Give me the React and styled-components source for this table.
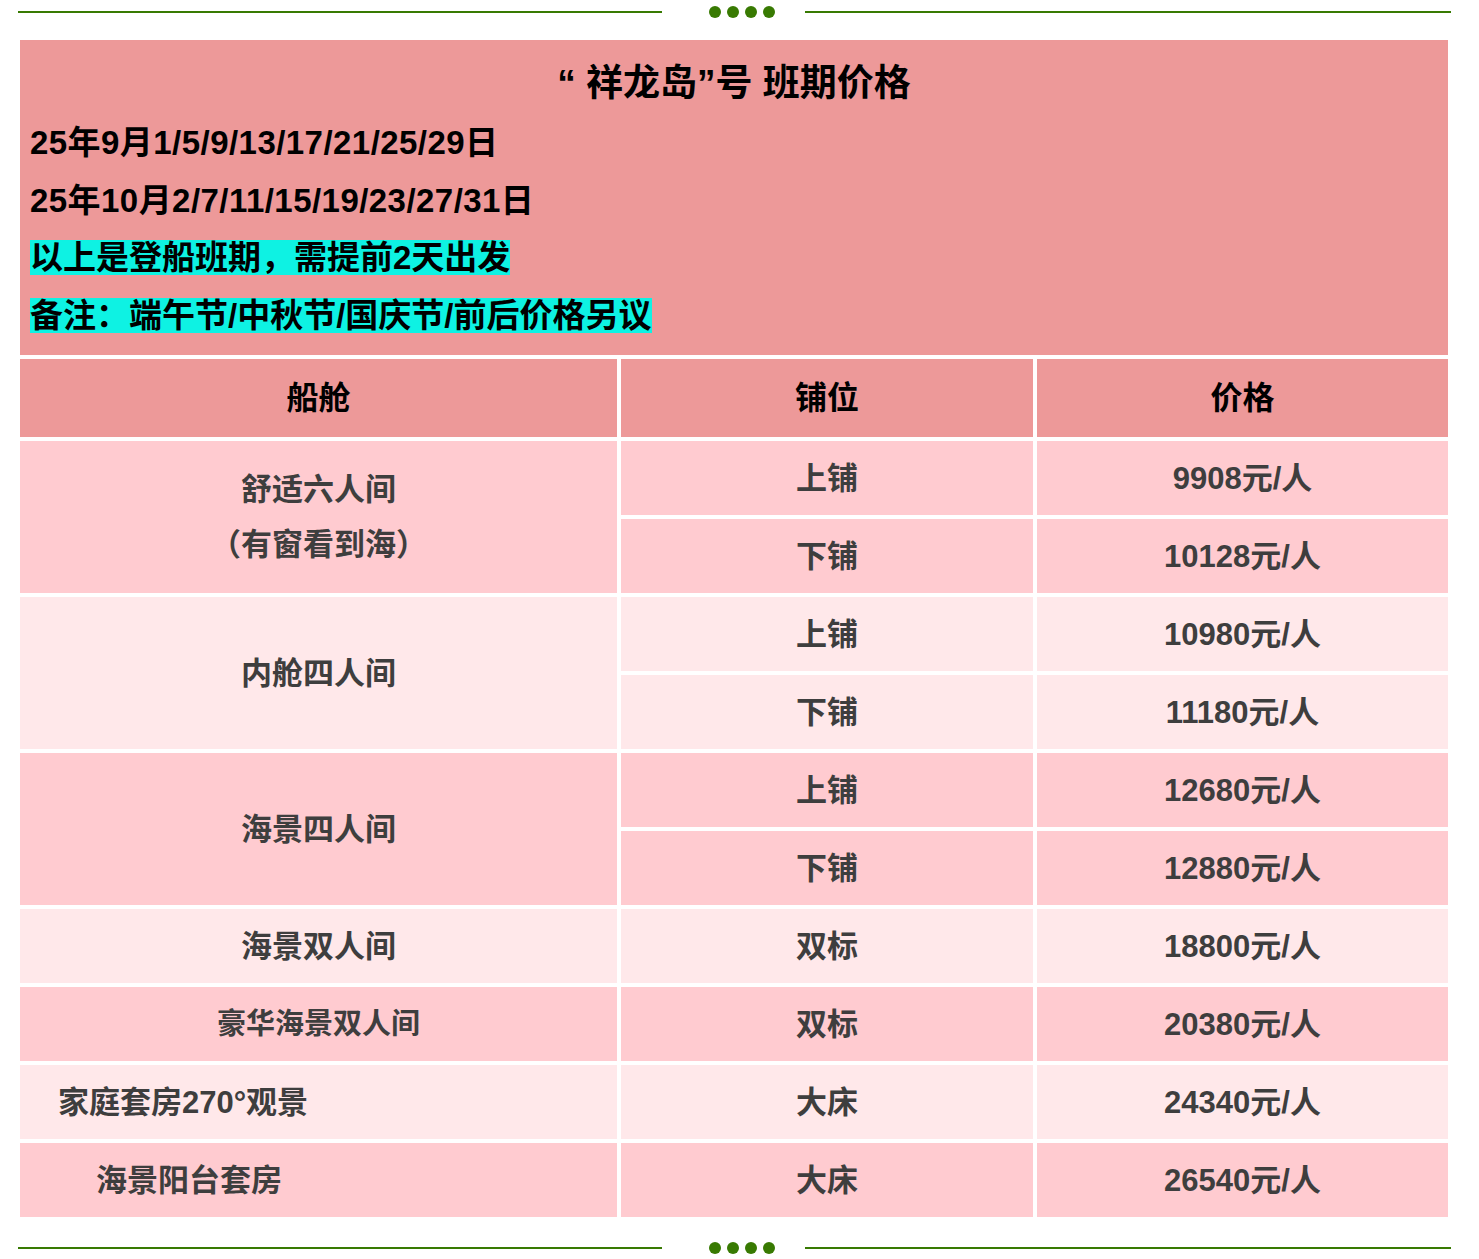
import styled, { createGlobalStyle } from "styled-components";

const GlobalStyle = createGlobalStyle`
    html, body {
        margin: 0;
        padding: 0;
        background: #ffffff;
        overflow: hidden;
    }
    body {
        font-family: "Liberation Sans", "Noto Sans CJK SC", sans-serif;
        font-weight: 700;
    }
`;

const Page = styled.div`
    width: 1479px;
`;

const Divider = styled.div`
    display: flex;
    align-items: center;
    height: 23px;
    padding-left: 18px;
    margin-top: ${(p) => p.$top || 0}px;
`;

const Line = styled.div`
    width: ${(p) => p.$w}px;
    height: 2px;
    background: #387a02;
`;

const Dots = styled.div`
    display: flex;
    gap: 6px;
    margin: 0 30px 0 47px;
`;

const Dot = styled.span`
    width: 12px;
    height: 12px;
    border-radius: 50%;
    background: #387a02;
`;

const Table = styled.div`
    display: grid;
    grid-template-columns: 597px 412px 411px;
    grid-template-rows: 315px 78px repeat(10, 74px);
    gap: 4px;
    width: 1428px;
    margin: 17px 0 0 20px;
`;

const Intro = styled.div`
    grid-column: 1 / span 3;
    background: #ed9999;
    padding: 10px 10px 9px;
    color: #000;
`;

const Title = styled.div`
    font-size: 37px;
    padding-top: 4px;
    line-height: 60px;
    height: 60px;
    text-align: center;
    white-space: pre;
`;

const InfoLine = styled.div`
    display: flex;
    align-items: center;
    font-size: 33px;
    line-height: 58px;
    height: 58px;
    white-space: nowrap;
    letter-spacing: ${(p) => (p.$wide ? "0.45px" : "0")};
`;

const Mark = styled.span`
    line-height: 35px;
    margin-top: -3px;
    background: #0ef2e3;
`;

const HeadCell = styled.div`
    display: flex;
    align-items: center;
    justify-content: center;
    padding-bottom: 6px;
    background: #ed9999;
    color: #000;
    font-size: 32px;
`;

const Cell = styled.div`
    display: flex;
    flex-direction: column;
    align-items: ${(p) => (p.$indent != null ? "flex-start" : "center")};
    justify-content: center;
    padding-left: ${(p) => p.$indent || 0}px;
    grid-row: span ${(p) => p.$span || 1};
    background: ${(p) => (p.$light ? "#ffe8ea" : "#ffcbd0")};
    color: #3e3e3e;
    font-size: ${(p) => p.$size || 31}px;
    line-height: 55px;
    white-space: nowrap;
`;

const rows = [
    { cabin: ["舒适六人间", "（有窗看到海）"], light: false, beds: [["上铺", "9908元/人"], ["下铺", "10128元/人"]] },
    { cabin: ["内舱四人间"], light: true, beds: [["上铺", "10980元/人"], ["下铺", "11180元/人"]] },
    { cabin: ["海景四人间"], light: false, beds: [["上铺", "12680元/人"], ["下铺", "12880元/人"]] },
    { cabin: ["海景双人间"], light: true, beds: [["双标", "18800元/人"]] },
    { cabin: ["豪华海景双人间"], light: false, size: 29, beds: [["双标", "20380元/人"]] },
    { cabin: ["家庭套房270°观景"], light: true, indent: 38, beds: [["大床", "24340元/人"]] },
    { cabin: ["海景阳台套房"], light: false, indent: 76, beds: [["大床", "26540元/人"]] },
];

const Separator = ({ top }) => (
    <Divider $top={top}>
        <Line $w={644} />
        <Dots>
            <Dot />
            <Dot />
            <Dot />
            <Dot />
        </Dots>
        <Line $w={646} />
    </Divider>
);

const App = () => {
    return (
        <Page>
            <GlobalStyle />
            <Separator />
            <Table>
                <Intro>
                    <Title>{"“ 祥龙岛”号 班期价格"}</Title>
                    <InfoLine $wide>25年9月1/5/9/13/17/21/25/29日</InfoLine>
                    <InfoLine $wide>25年10月2/7/11/15/19/23/27/31日</InfoLine>
                    <InfoLine>
                        <Mark>以上是登船班期，需提前2天出发</Mark>
                    </InfoLine>
                    <InfoLine>
                        <Mark>备注：端午节/中秋节/国庆节/前后价格另议</Mark>
                    </InfoLine>
                </Intro>

                <HeadCell>船舱</HeadCell>
                <HeadCell>铺位</HeadCell>
                <HeadCell>价格</HeadCell>

                {rows.map((row, i) =>
                    row.beds.map((bed, j) => [
                        j === 0 && (
                            <Cell
                                key={`c${i}`}
                                $span={row.beds.length}
                                $light={row.light}
                                $indent={row.indent}
                                $size={row.size}
                            >
                                {row.cabin.map((t) => (
                                    <span key={t}>{t}</span>
                                ))}
                            </Cell>
                        ),
                        <Cell key={`b${i}${j}`} $light={row.light}>{bed[0]}</Cell>,
                        <Cell key={`p${i}${j}`} $light={row.light}>{bed[1]}</Cell>,
                    ])
                )}
            </Table>
            <Separator top={19} />
        </Page>
    );
};

export default App;
